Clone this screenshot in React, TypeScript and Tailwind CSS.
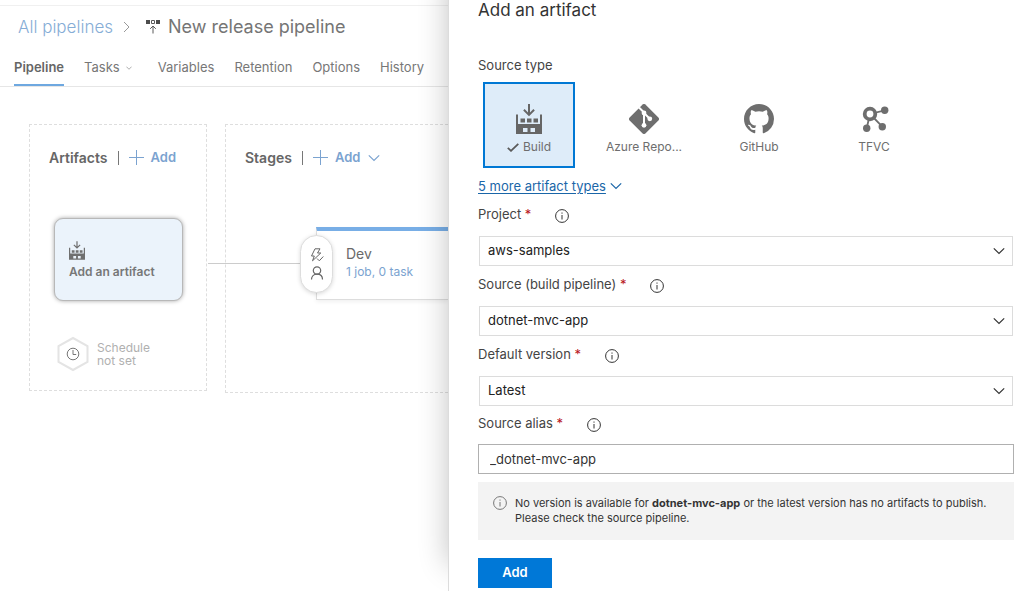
import { useState } from "react";
import type { ReactNode } from "react";

const tabs = ["Variables", "Retention", "Options", "History"];

const projects = ["aws-samples"];
const pipelines = ["dotnet-mvc-app"];
const versions = ["Latest"];

function ChevronIcon({ className }: { className?: string }) {
  return (
    <svg
      viewBox="0 0 12 8"
      fill="none"
      stroke="currentColor"
      strokeWidth="1.2"
      className={className}
      aria-hidden="true"
    >
      <path d="M.8 1.3 6 6.500 11.200 1.300" />
    </svg>
  );
}

function PlusIcon() {
  return (
    <svg
      viewBox="0 0 16 16"
      fill="none"
      stroke="currentColor"
      className="h-4 w-4 shrink-0"
      aria-hidden="true"
    >
      <path d="M7.5 0v15M0 7.5h15" />
    </svg>
  );
}

function BuildIcon({ className }: { className?: string }) {
  return (
    <svg
      viewBox="0 0 26 30"
      fill="currentColor"
      className={className}
      aria-hidden="true"
    >
      <path d="M12 0h2v8.5l3.4-3.4 1.4 1.4L13 12.3 7.2 6.5l1.4-1.4L12 8.5z" />
      <path
        d="M0 10.5h2V20h22v-9.500h2V30H0z M7 24v4h4.500v-4z M14.500 24v4H19v-4z"
        fillRule="evenodd"
      />
      <path d="M4.500 14.500H9v4H4.500z M11 14.500h4.500v4H11z M17.500 14.500H22v4h-4.500z" />
    </svg>
  );
}

function ReleaseIcon() {
  return (
    <svg viewBox="0 0 14 14" className="h-3.5 w-3.5 shrink-0" aria-hidden="true">
      <path d="M0 0h4v4H0zM10 0h4v4h-4z" fill="#4d4d4d" />
      <path
        d="M5.500.5h3v3h-3zM7 13.500V6M4.200 8.800 7 6l2.800 2.800"
        fill="none"
        stroke="#5a5a5a"
      />
    </svg>
  );
}

function GitIcon() {
  return (
    <svg viewBox="0 0 30 30" className="h-[30px] w-[30px]" aria-hidden="true">
      <path
        d="M13.600.600a2 2 0 0 1 2.800 0l13 13a2 2 0 0 1 0 2.800l-13 13a2 2 0 0 1-2.800 0l-13-13a2 2 0 0 1 0-2.800z"
        fill="#6e6e6e"
      />
      <g fill="none" stroke="#fff" strokeWidth="2">
        <path d="M10 3.500 15 8.500V21M15 9l5.500 5.500" />
      </g>
      <g fill="#fff">
        <circle cx="15" cy="9" r="2.400" />
        <circle cx="15" cy="21.300" r="2.400" />
        <circle cx="20.800" cy="14.800" r="2.400" />
      </g>
    </svg>
  );
}

function GitHubIcon() {
  return (
    <svg
      viewBox="0 0 16 16"
      fill="#6e6e6e"
      className="h-[30px] w-[30px]"
      aria-hidden="true"
    >
      <path d="M8 0C3.580 0 0 3.580 0 8c0 3.540 2.290 6.530 5.470 7.590.4.070.55-.17.55-.38 0-.19-.01-.82-.01-1.490-2.010.37-2.530-.49-2.690-.94-.09-.23-.48-.94-.82-1.130-.28-.15-.68-.52-.01-.53.63-.01 1.080.58 1.230.82.72 1.210 1.870.87 2.330.66.07-.52.28-.87.51-1.070-1.780-.2-3.640-.89-3.640-3.950 0-.87.31-1.590.82-2.150-.08-.2-.36-1.020.08-2.120 0 0 .67-.21 2.200.82.64-.18 1.320-.27 2-.27s1.360.09 2 .27c1.530-1.040 2.200-.82 2.200-.82.44 1.100.16 1.920.08 2.120.51.56.82 1.270.82 2.150 0 3.070-1.870 3.750-3.650 3.950.29.25.54.73.54 1.480 0 1.070-.01 1.930-.01 2.200 0 .21.15.46.55.38A8.010 8.010 0 0 0 16 8c0-4.420-3.580-8-8-8z" />
    </svg>
  );
}

function TfvcIcon() {
  return (
    <svg viewBox="0 0 30 30" className="h-[30px] w-[30px]" aria-hidden="true">
      <g fill="none" stroke="#6e6e6e">
        <path d="m11 10 14.700-3.700M11 10l12.300 12.700M11 10 7.700 24.300" strokeWidth="1.800" />
        <circle cx="11" cy="10" r="5.300" strokeWidth="3.800" fill="#fff" />
      </g>
      <g fill="#6e6e6e">
        <circle cx="25.700" cy="6.300" r="3.700" />
        <circle cx="23.300" cy="22.700" r="3.700" />
        <circle cx="7.700" cy="24.300" r="3.700" />
      </g>
    </svg>
  );
}

function InfoIcon({ className }: { className?: string }) {
  return (
    <svg
      viewBox="0 0 14 14"
      fill="none"
      stroke="currentColor"
      className={className}
      aria-hidden="true"
    >
      <circle cx="7" cy="7" r="6.400" />
      <path d="M7 6v4.500M7 3.500v1.200" />
    </svg>
  );
}

function FieldLabel({ id, children }: { id: string; children: ReactNode }) {
  return (
    <div className="flex items-center pb-1">
      <label htmlFor={id} className="text-[13px] leading-5 text-[#444]">
        {children} <span className="text-[#b8141a]">*</span>
      </label>
      <button type="button" aria-label="More information" className="ml-6 mt-1">
        <InfoIcon className="h-3.5 w-3.5 text-[#333]" />
      </button>
    </div>
  );
}

function SelectField({
  id,
  label,
  options,
}: {
  id: string;
  label: string;
  options: string[];
}) {
  return (
    <div>
      <div className="flex h-10 items-center">
        <FieldLabel id={id}>{label}</FieldLabel>
      </div>
      <div className="relative mx-px">
        <select
          id={id}
          className="block h-[30px] w-full appearance-none border border-[#dcdcdc] bg-white px-2 text-[13px] text-[#222]"
        >
          {options.map((option) => (
            <option key={option}>{option}</option>
          ))}
        </select>
        <ChevronIcon className="pointer-events-none absolute right-2 top-[11px] h-2 w-3 text-[#333]" />
      </div>
    </div>
  );
}

function SourceTile({
  icon,
  label,
  selected,
  onSelect,
}: {
  icon: ReactNode;
  label: string;
  selected: boolean;
  onSelect: () => void;
}) {
  return (
    <button
      type="button"
      aria-pressed={selected}
      onClick={onSelect}
      className={`flex h-[86px] w-[92px] flex-col items-center border-2 pt-5 text-xs leading-4 text-[#6e6e6e] ${
        selected ? "border-[#0078d4] bg-[#deecf9]" : "border-transparent"
      }`}
    >
      {icon}
      <span className="mt-[5px] flex items-center gap-1 whitespace-nowrap">
        {selected && (
          <svg
            viewBox="0 0 12 9"
            fill="none"
            stroke="#5a5a5a"
            strokeWidth="1.800"
            className="h-[9px] w-3"
            aria-hidden="true"
          >
            <path d="m.8 4.800 3.200 3L11.300.8" />
          </svg>
        )}
        {label}
      </span>
    </button>
  );
}

function Header() {
  return (
    <header className="mt-[5px] border-t border-[#f0f0f0]">
      <div className="flex h-[42px] items-center whitespace-nowrap pl-[18px] text-lg">
        <a href="#pipelines" className="text-[17px] font-light text-[#86add6]">
          All pipelines
        </a>
        <svg
          viewBox="0 0 7 12"
          fill="none"
          stroke="#999"
          className="ml-2.5 h-3 w-[7px] shrink-0"
          aria-hidden="true"
        >
          <path d="m1 1 5 5-5 5" />
        </svg>
        <span className="ml-4 flex items-center gap-2">
          <ReleaseIcon />
          <h1 className="text-[#757575]">New release pipeline</h1>
        </span>
      </div>
      <nav className="flex h-[39px] items-stretch gap-5 whitespace-nowrap border-b border-[#e6e6e6] pl-3.5 text-[13px] text-[#777]">
        <a
          href="#pipeline"
          className="flex items-center border-b-2 border-[#6ea8e0] pt-1 font-semibold text-[#666]"
        >
          Pipeline
        </a>
        <a href="#tasks" className="flex items-center gap-1.5 pt-0.5">
          Tasks
          <ChevronIcon className="mr-1.5 h-1 w-1.5" />
        </a>
        {tabs.map((tab) => (
          <a key={tab} href={`#${tab.toLowerCase()}`} className="flex items-center pt-0.5">
            {tab}
          </a>
        ))}
      </nav>
    </header>
  );
}

function ArtifactsColumn() {
  return (
    <section className="w-[178px] shrink-0 border border-dashed border-[#dedede] px-6 pb-[18px] pt-[21px]">
      <div className="-ml-[5px] flex h-6 items-center gap-2.5">
        <h2 className="text-sm font-semibold text-[#666]">Artifacts</h2>
        <span className="h-3.5 w-px bg-[#777]" />
        <button
          type="button"
          className="flex items-center gap-1.5 text-[13px] font-semibold text-[#7ba3d0]"
        >
          <PlusIcon />
          Add
        </button>
      </div>
      <button
        type="button"
        className="mt-12 flex h-[83px] w-[129px] flex-col items-start justify-center gap-1 rounded-[9px] border border-[#b8b8b8] bg-[#ebf3fb] pl-3.5 pt-0.5 text-left shadow-[0_0_4px_rgba(0,0,0,0.35)]"
      >
        <BuildIcon className="h-[19px] w-4 text-[#6f6f6f]" />
        <span className="text-xs font-semibold text-[#777]">Add an artifact</span>
      </button>
      <button
        type="button"
        className="ml-px mt-[35px] flex items-center gap-1.5 text-left text-xs leading-[13px] text-[#b0b0b0]"
      >
        <svg
          viewBox="0 0 36 36"
          fill="none"
          className="h-9 w-9 shrink-0"
          aria-hidden="true"
        >
          <path
            d="m18 2 14.500 8v16L18 34 3.500 26V10z"
            stroke="#e4e4e4"
            strokeWidth="2"
          />
          <g stroke="#777">
            <circle cx="18" cy="18" r="5.800" />
            <path d="M18 14v4.500h3.200" />
          </g>
        </svg>
        <span>
          Schedule
          <br />
          not set
        </span>
      </button>
    </section>
  );
}

function StagesColumn() {
  return (
    <section className="h-[269px] min-w-0 flex-1 border border-r-0 border-dashed border-[#dedede] pt-[21px]">
      <div className="flex h-6 items-center gap-2.5 pl-[19px]">
        <h2 className="text-sm font-semibold text-[#666]">Stages</h2>
        <span className="h-3.5 w-px bg-[#777]" />
        <button
          type="button"
          className="flex items-center gap-1.5 text-[13px] font-semibold text-[#7ba3d0]"
        >
          <PlusIcon />
          Add
          <ChevronIcon className="ml-0.5 h-2 w-3" />
        </button>
      </div>
      {/* Connector from the artifacts column into the first stage */}
      <div className="-ml-[18px] mt-[57px] flex items-center">
        <div className="h-px w-[108px] shrink-0 bg-[#ccc]" />
        <div className="relative h-[73px] min-w-0 flex-1 border-b border-l border-t-4 border-[#ddd] border-t-[#78aee6] pl-[29px] pt-[13px] shadow-[0_2px_4px_rgba(0,0,0,0.06)]">
          <div className="absolute -left-[17px] top-1 flex h-[58px] w-[33px] flex-col items-center justify-center gap-1 rounded-full border border-[#ddd] bg-white text-[#666] shadow-[0_1px_4px_rgba(0,0,0,0.15)]">
            <svg
              viewBox="0 0 14 14"
              fill="none"
              stroke="currentColor"
              className="h-3.5 w-3.5"
              aria-hidden="true"
            >
              <path d="M5 .8h5L7.500 5h3.300L2.500 12.800 4.300 8H1.500zM7 10.500l2.300 2.300 4-4.300" />
            </svg>
            <svg
              viewBox="0 0 14 14"
              fill="none"
              stroke="currentColor"
              strokeWidth="1.200"
              className="h-3.5 w-3.5"
              aria-hidden="true"
            >
              <circle cx="7" cy="4.500" r="3.700" />
              <path d="M1.500 13.500c0-3.300 2.200-5.300 5.500-5.300s5.500 2 5.500 5.300" />
            </svg>
          </div>
          <h3 className="text-sm leading-5 text-[#6a6a6a]">Dev</h3>
          <a
            href="#tasks"
            className="block whitespace-nowrap text-xs leading-4 text-[#7ba3d0]"
          >
            1 job, 0 task
          </a>
        </div>
      </div>
    </section>
  );
}

function ArtifactPanel() {
  const [sourceType, setSourceType] = useState("Build");
  const [alias, setAlias] = useState("_dotnet-mvc-app");

  const sources = [
    {
      label: "Build",
      icon: <BuildIcon className="h-[30px] w-[26px] text-[#666]" />,
    },
    { label: "Azure Repo...", icon: <GitIcon /> },
    { label: "GitHub", icon: <GitHubIcon /> },
    { label: "TFVC", icon: <TfvcIcon /> },
  ];

  return (
    <aside className="relative z-10 min-w-0 flex-1 border-l border-[#dcdcdc] bg-white pl-[29px] pr-2.5 shadow-[0_-26px_28px_rgba(0,0,0,0.24)]">
      <h2 className="text-[17px] leading-5 text-[#333]">Add an artifact</h2>
      <p className="mt-[35px] text-[13px] leading-5 text-[#444]">Source type</p>
      <div className="ml-[5px] mt-[7px] flex gap-[23px]">
        {sources.map((source) => (
          <SourceTile
            key={source.label}
            icon={source.icon}
            label={source.label}
            selected={sourceType === source.label}
            onSelect={() => setSourceType(source.label)}
          />
        ))}
      </div>
      <a
        href="#types"
        className="mt-2 flex items-center gap-1 text-[13px] leading-5 text-[#1a66a8]"
      >
        <span className="underline underline-offset-2">5 more artifact types</span>
        <ChevronIcon className="h-2 w-3" />
      </a>

      <form onSubmit={(e) => e.preventDefault()}>
        <SelectField id="project" label="Project" options={projects} />
        <SelectField
          id="source"
          label="Source (build pipeline)"
          options={pipelines}
        />
        <SelectField id="version" label="Default version" options={versions} />
        <div className="flex h-[38px] items-center">
          <FieldLabel id="alias">Source alias</FieldLabel>
        </div>
        <input
          id="alias"
          type="text"
          value={alias}
          onChange={(e) => setAlias(e.target.value)}
          className="block h-[30px] w-full border border-[#b0b0b0] px-[11px] text-[13px] text-[#333]"
        />

        <div className="mt-2 flex h-[58px] gap-2 bg-[#f3f3f3] pl-[15px] pt-3.5 text-[11px] leading-[15px] text-[#333]">
          <InfoIcon className="h-3.5 w-3.5 shrink-0 text-[#777]" />
          <p>
            No version is available for <strong>dotnet-mvc-app</strong> or the
            latest version has no artifacts to publish.
            <br />
            Please check the source pipeline.
          </p>
        </div>

        <button
          type="submit"
          className="mt-[18px] h-[30px] w-[74px] bg-[#0078d7] text-[13px] font-semibold text-white"
        >
          Add
        </button>
      </form>
    </aside>
  );
}

export default function App() {
  return (
    <div className="flex min-h-screen overflow-hidden bg-white font-['Inter','Liberation_Sans',sans-serif]">
      <main className="w-7/16 shrink-0 overflow-hidden">
        <Header />
        <div className="mt-[37px] flex items-start gap-[18px] pl-[29px]">
          <ArtifactsColumn />
          <StagesColumn />
        </div>
      </main>
      <ArtifactPanel />
    </div>
  );
}
